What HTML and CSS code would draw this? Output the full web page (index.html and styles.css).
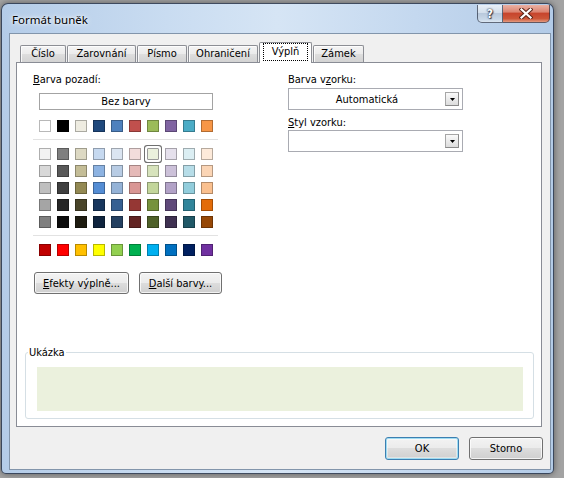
FILE: index.html
```html
<!DOCTYPE html>
<html lang="cs">
<head>
<meta charset="utf-8">
<title>Formát buněk</title>
<link rel="stylesheet" href="styles.css">
</head>
<body>
<div class="window">
  <div class="titlebar">
    <span class="title">Formát buněk</span>
    <div class="caption">
      <div class="cbtn help">?</div>
      <div class="cbtn close">
        <svg width="14" height="11" viewBox="0 0 14 11"><path d="M2.5 1.5L11.5 9.5M11.5 1.5L2.5 9.5" stroke="#5a2418" stroke-width="4.2" stroke-linecap="square"/><path d="M2.5 1.5L11.5 9.5M11.5 1.5L2.5 9.5" stroke="#fff" stroke-width="2.2" stroke-linecap="square"/></svg>
      </div>
    </div>
  </div>
  <div class="client">
    <div class="tabs">
      <div class="tab t1">Číslo</div>
      <div class="tab t2">Zarovnání</div>
      <div class="tab t3">Písmo</div>
      <div class="tab t4">Ohraničení</div>
      <div class="tab active"><span class="focus">Výplň</span></div>
      <div class="tab t6">Zámek</div>
    </div>
    <div class="panel">
      <div class="top">
        <div class="left">
          <div class="label"><u>B</u>arva pozadí:</div>
          <div class="nocolor">Bez barvy</div>
          <div class="swrow first">
            <span class="sw" style="background:#ffffff"></span><span class="sw" style="background:#000000"></span><span class="sw" style="background:#eeece1"></span><span class="sw" style="background:#1f497d"></span><span class="sw" style="background:#4f81bd"></span><span class="sw" style="background:#c0504d"></span><span class="sw" style="background:#9bbb59"></span><span class="sw" style="background:#8064a2"></span><span class="sw" style="background:#4bacc6"></span><span class="sw" style="background:#f79646"></span>
          </div>
          <div class="sep"></div>
          <div class="swgrid">
            <span class="sw" style="background:#f2f2f2"></span><span class="sw" style="background:#7f7f7f"></span><span class="sw" style="background:#ddd9c3"></span><span class="sw" style="background:#c6d9f0"></span><span class="sw" style="background:#dbe5f1"></span><span class="sw" style="background:#f2dcdb"></span><span class="sw sel" style="background:#ebf1dd"></span><span class="sw" style="background:#e5e0ec"></span><span class="sw" style="background:#dbeef3"></span><span class="sw" style="background:#fdeada"></span>
            <span class="sw" style="background:#d8d8d8"></span><span class="sw" style="background:#595959"></span><span class="sw" style="background:#c4bd97"></span><span class="sw" style="background:#8db3e2"></span><span class="sw" style="background:#b8cce4"></span><span class="sw" style="background:#e5b9b7"></span><span class="sw" style="background:#d7e3bc"></span><span class="sw" style="background:#ccc1d9"></span><span class="sw" style="background:#b7dde8"></span><span class="sw" style="background:#fbd5b5"></span>
            <span class="sw" style="background:#bfbfbf"></span><span class="sw" style="background:#3f3f3f"></span><span class="sw" style="background:#938953"></span><span class="sw" style="background:#548dd4"></span><span class="sw" style="background:#95b3d7"></span><span class="sw" style="background:#d99694"></span><span class="sw" style="background:#c3d69b"></span><span class="sw" style="background:#b2a2c7"></span><span class="sw" style="background:#92cddc"></span><span class="sw" style="background:#fac08f"></span>
            <span class="sw" style="background:#a5a5a5"></span><span class="sw" style="background:#262626"></span><span class="sw" style="background:#494429"></span><span class="sw" style="background:#17365d"></span><span class="sw" style="background:#366092"></span><span class="sw" style="background:#953734"></span><span class="sw" style="background:#76923c"></span><span class="sw" style="background:#5f497a"></span><span class="sw" style="background:#31859b"></span><span class="sw" style="background:#e36c09"></span>
            <span class="sw" style="background:#7f7f7f"></span><span class="sw" style="background:#0c0c0c"></span><span class="sw" style="background:#1d1b10"></span><span class="sw" style="background:#0f243e"></span><span class="sw" style="background:#244061"></span><span class="sw" style="background:#632423"></span><span class="sw" style="background:#4f6128"></span><span class="sw" style="background:#3f3151"></span><span class="sw" style="background:#205867"></span><span class="sw" style="background:#974806"></span>
          </div>
          <div class="sep"></div>
          <div class="swrow">
            <span class="sw" style="background:#c00000"></span><span class="sw" style="background:#ff0000"></span><span class="sw" style="background:#ffc000"></span><span class="sw" style="background:#ffff00"></span><span class="sw" style="background:#92d050"></span><span class="sw" style="background:#00b050"></span><span class="sw" style="background:#00b0f0"></span><span class="sw" style="background:#0070c0"></span><span class="sw" style="background:#002060"></span><span class="sw" style="background:#7030a0"></span>
          </div>
          <div class="btnrow">
            <button class="btn effects"><u>E</u>fekty výplně...</button>
            <button class="btn more"><u>D</u>alší barvy...</button>
          </div>
        </div>
        <div class="right">
          <div class="label">Barva v<u>z</u>orku:</div>
          <div class="combo first"><span class="value">Automatická</span><span class="arrow"><svg width="5" height="3" viewBox="0 0 5 3"><path d="M0 0h5L2.5 3z" fill="#000"/></svg></span></div>
          <div class="label second"><u>S</u>tyl vzorku:</div>
          <div class="combo"><span class="value"></span><span class="arrow"><svg width="5" height="3" viewBox="0 0 5 3"><path d="M0 0h5L2.5 3z" fill="#000"/></svg></span></div>
        </div>
      </div>
      <fieldset class="sample">
        <legend>Ukázka</legend>
        <div class="preview"></div>
      </fieldset>
    </div>
    <div class="footer">
      <button class="btn dlg default">OK</button>
      <button class="btn dlg">Storno</button>
    </div>
  </div>
</div>
</body>
</html>
```

FILE: styles.css
```css
* { box-sizing: border-box; }

body {
  margin: 0;
  width: 564px;
  height: 478px;
  overflow: hidden;
  background: #a3a3a3;
  font-family: "DejaVu Sans Condensed", "DejaVu Sans", sans-serif;
  font-stretch: condensed;
  font-size: 11px;
  color: #000;
}

.window {
  margin: 3px 0 0 1px;
  width: 553px;
  height: 471px;
  border: 1px solid rgba(28, 38, 58, 0.8);
  border-radius: 7px 7px 5px 5px;
  padding: 0 2px 3px 7px;
  background: linear-gradient(to right, #b4cce8 0%, #c9dcf1 30%, #d6e5f5 50%, #c4d8ef 75%, #b3cbe7 100%);
  box-shadow: 0 0 6px rgba(0, 0, 0, 0.45);
  display: flex;
  flex-direction: column;
}

.titlebar {
  height: 29px;
  margin: 0 -2px 0 -7px;
  padding: 0 3px 0 10px;
  display: flex;
  justify-content: space-between;
  align-items: flex-start;
}

.title {
  margin-top: 8px;
  font-family: "Noto Sans", sans-serif;
  font-size: 11.5px;
  line-height: 16px;
  text-shadow: 0 0 6px #fff, 0 0 3px #fff;
}

.caption {
  display: flex;
  margin-top: 1px;
}

.cbtn {
  height: 18px;
  display: flex;
  align-items: center;
  justify-content: center;
  border: 1px solid rgba(40, 50, 70, 0.7);
  border-top: none;
}

.help {
  width: 26px;
  border-radius: 0 0 0 5px;
  background: linear-gradient(#e8eff7 0%, #d3dfec 45%, #b9c9dc 50%, #c9d8e8 85%, #dce7f2 100%);
  font-family: "DejaVu Sans", sans-serif;
  font-weight: bold;
  font-size: 12px;
  color: #fff;
  text-shadow: 0 0 1px #334, 0 0 2px #334, 1px 1px 1px #445;
}

.close {
  width: 47px;
  border-left: none;
  border-radius: 0 0 5px 0;
  background: linear-gradient(#eab1a3 0%, #dc8572 40%, #c7452d 50%, #cc5638 80%, #e49a80 100%);
}

.client {
  height: 437px;
  border: 1px solid #8295ab;
  background: #f0f0f0;
  padding: 8px 7px 0 6px;
  display: flex;
  flex-direction: column;
}

.tabs {
  display: flex;
  align-items: flex-end;
  height: 20px;
  padding-left: 4px;
  gap: 1px;
}

.tab {
  height: 17px;
  padding: 0;
  border: 1px solid #8c8e94;
  border-bottom: none;
  border-radius: 2px 2px 0 0;
  background: linear-gradient(#f4f4f4 0%, #ebebeb 50%, #dedede 50%, #d3d3d3 100%);
  box-shadow: inset 1px 1px 0 rgba(255, 255, 255, 0.8);
  line-height: 15px;
  text-align: center;
  white-space: nowrap;
}

.t1 { width: 46px; }
.t2 { width: 69px; }
.t3 { width: 50px; }
.t4 { width: 70px; }
.t6 { width: 51px; }

.tab.active {
  position: relative;
  z-index: 1;
  width: 53px;
  height: 21px;
  margin: 0 0 -1px 0;
  padding: 0 3px;
  background: #fff;
  box-shadow: none;
}

.focus {
  display: block;
  height: 18px;
  padding: 0;
  border: 1px dotted #000;
  line-height: 16px;
  text-align: center;
}

.panel {
  height: 365px;
  margin-right: 1px;
  border: 1px solid #898c95;
  background: #fff;
  padding: 10px 0 0 16px;
  display: flex;
  flex-direction: column;
}

.top { display: flex; }

.left { width: 255px; }

.right { width: 175px; margin-left: 0; }

.label {
  height: 13px;
  line-height: 13px;
  white-space: nowrap;
}

.label.second { margin-top: 6px; }

.nocolor {
  margin: 7px 0 0 6px;
  width: 174px;
  height: 17px;
  border: 1px solid #a3a3a3;
  text-align: center;
  line-height: 15px;
}

.swrow {
  display: flex;
  gap: 6px;
  margin-left: 6px;
}

.swrow.first { margin-top: 10px; }

.swgrid {
  display: grid;
  grid-template-columns: repeat(10, 12px);
  grid-auto-rows: 12px;
  gap: 5px 6px;
  margin-left: 6px;
}

.sw {
  display: block;
  width: 12px;
  height: 12px;
  border: 1px solid rgba(0, 0, 0, 0.28);
}

.sw.sel {
  border-radius: 1px;
  border-color: #9a9a9a;
  box-shadow: 0 0 0 2px #fff, 0 0 0 3px #707070;
}

.sep {
  width: 185px;
  height: 1px;
  margin: 7px 0 8px;
  background: #e2e2e2;
}

.btnrow {
  display: flex;
  gap: 10px;
  margin: 16px 0 0 1px;
}

.btn {
  font: inherit;
  font-size: 11px;
  color: #000;
  height: 22px;
  padding: 0;
  border: 1px solid #707070;
  border-radius: 3px;
  background: linear-gradient(#f3f3f3 0%, #ebebeb 50%, #dddddd 50%, #cfcfcf 100%);
  box-shadow: inset 0 0 0 1px rgba(255, 255, 255, 0.75);
  white-space: nowrap;
}

.effects { width: 95px; }
.more { width: 83px; }

.combo {
  width: 175px;
  height: 22px;
  border: 1px solid #a9abb2;
  background: #fff;
  display: flex;
  align-items: center;
  padding-right: 3px;
}

.combo.first { margin-top: 2px; }
.label.second + .combo { margin-top: 1px; }

.value {
  flex: 1;
  text-align: center;
  line-height: 13px;
}

.arrow {
  width: 14px;
  height: 14px;
  border: 1px solid #a6a6a6;
  border-right-color: #8a8a8a;
  border-bottom-color: #8a8a8a;
  background: linear-gradient(#fafafa, #dcdcdc);
  display: flex;
  align-items: center;
  justify-content: center;
}

.arrow svg { display: block; }

.sample {
  margin: 52px 7px 0 -8px;
  padding: 8px 10px 7px 11px;
  border: 1px solid #d5dfe5;
  border-radius: 3px;
  min-width: 0;
}

.sample legend {
  margin-left: -9px;
  padding: 0 1px;
  line-height: 13px;
}

.preview {
  height: 44px;
  background: #ebf1dd;
}

.footer {
  display: flex;
  justify-content: flex-end;
  gap: 10px;
  margin-top: 10px;
}

.btn.dlg {
  width: 74px;
  height: 23px;
}

.btn.default {
  border-color: #3c7fb1;
  box-shadow: inset 0 0 0 1px #9fdcf2, inset 0 0 0 2px rgba(255, 255, 255, 0.4);
}
```
